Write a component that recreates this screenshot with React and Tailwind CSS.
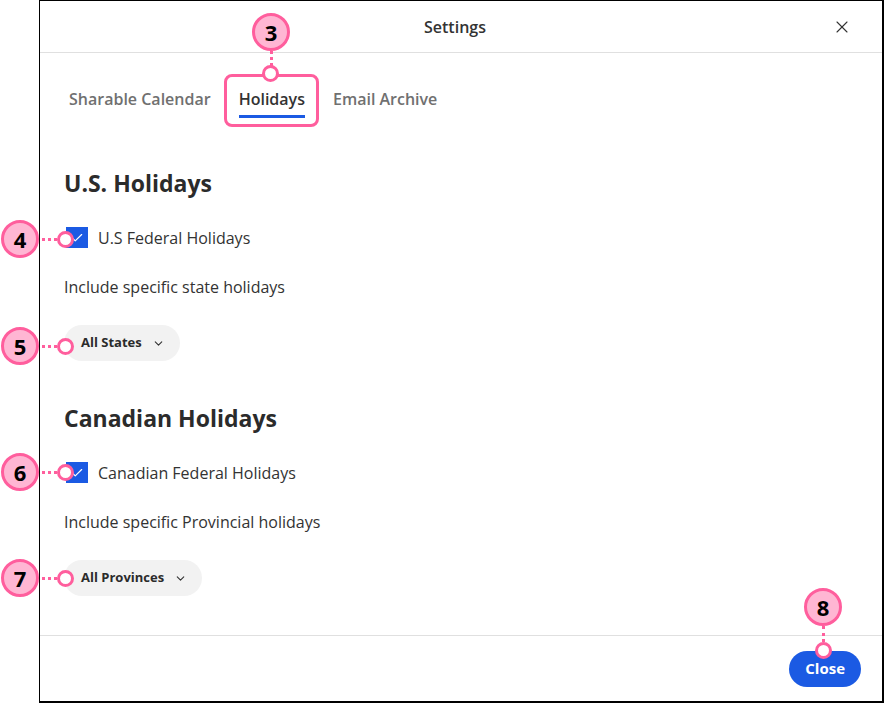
import { X, ChevronDown, Check } from 'lucide-react';

const font = { fontFamily: '"Open Sans", "Noto Sans", sans-serif' };

const Marker = ({ n, className }) => (
  <div className={`absolute w-[38px] h-[38px] rounded-full bg-[#ffb6d3] border-[3px] border-[#ff5e9d] flex items-center justify-center text-[22px] font-bold text-black ${className}`}>
    {n}
  </div>
);

const Dot = ({ className }) => (
  <div className={`absolute w-[17px] h-[17px] rounded-full bg-white border-[3px] border-[#ff5e9d] ${className}`} />
);

// marker on the left edge: circle, dotted leader, small ring
const SideMarker = ({ n, className }) => (
  <div className={`absolute left-[1px] flex items-center ${className}`}>
    <div className="w-[38px] h-[38px] rounded-full bg-[#ffb6d3] border-[3px] border-[#ff5e9d] flex items-center justify-center text-[22px] font-bold text-black">
      {n}
    </div>
    <div className="w-[15px] ml-[3px] border-t-[3px] border-dotted border-[#ff5e9d]" />
    <div className="w-[17px] h-[17px] rounded-full bg-white border-[3px] border-[#ff5e9d]" />
  </div>
);

const CheckRow = ({ label }) => (
  <label className="flex items-center gap-[10px] ml-[2px]">
    <span className="w-[22px] h-[21px] bg-[#1b5ae3] flex items-center justify-center">
      <Check className="w-[14px] h-[14px] text-white" strokeWidth={2} />
    </span>
    <span className="text-[16px] leading-[20px] text-[#333]">{label}</span>
  </label>
);

const Pill = ({ label }) => (
  <button className="flex items-center gap-[10px] h-[36px] pl-[17px] pr-[15px] rounded-full bg-[#f2f2f2] text-[13px] font-bold text-[#2b2b2b] w-fit">
    {label}
    <ChevronDown className="w-[13px] h-[13px] text-[#333]" strokeWidth={2} />
  </button>
);

export default function App() {
  const tabs = ['Sharable Calendar', 'Holidays', 'Email Archive'];

  return (
    <div className="relative w-[884px] h-[703px] bg-white overflow-hidden" style={font}>
      <div className="ml-[39px] w-[845px] h-[703px] border border-black border-r-2 border-b-2 flex flex-col">
        <div className="relative h-[52px] border-b border-[#e0e0e0] flex items-center justify-center pr-[12px] shrink-0">
          <span className="text-[16px] font-semibold text-[#333]">Settings</span>
          <X className="absolute right-[30px] top-[16px] w-[20px] h-[20px] text-[#333]" strokeWidth={1.3} />
        </div>

        <div className="flex gap-7 px-[29px] mt-[36px]">
          {tabs.map(t => (
            <div
              key={t}
              className={`text-[16px] leading-[20px] font-semibold pb-[6px] border-b-[3px] ${
                t === 'Holidays' ? 'text-[#333] border-[#1b5ae3]' : 'text-[#707070] border-transparent'
              }`}
            >
              {t}
            </div>
          ))}
        </div>

        <div className="px-[24px] flex flex-col">
          <h2 className="mt-[51px] text-[23px] leading-[28px] font-bold text-[#2b2b2b]">U.S. Holidays</h2>
          <div className="mt-[30px]"><CheckRow label="U.S Federal Holidays" /></div>
          <p className="mt-[29px] text-[16px] leading-[20px] text-[#333]">Include specific state holidays</p>
          <div className="mt-[28px]"><Pill label="All States" /></div>

          <h2 className="mt-[43px] text-[23px] leading-[28px] font-bold text-[#2b2b2b]">Canadian Holidays</h2>
          <div className="mt-[30px]"><CheckRow label="Canadian Federal Holidays" /></div>
          <p className="mt-[29px] text-[16px] leading-[20px] text-[#333]">Include specific Provincial holidays</p>
          <div className="mt-[28px]"><Pill label="All Provinces" /></div>
        </div>

        <div className="flex-1" />
        <div className="h-[66px] border-t border-[#e0e0e0] flex items-center justify-end pr-[21px] shrink-0">
          <button className="h-[36px] px-[16px] rounded-full bg-[#1b5ae3] text-white text-[15px] font-bold">Close</button>
        </div>
      </div>

      {/* annotations */}
      <Marker n="3" className="left-[252px] top-[13px]" />
      <div className="absolute left-[270px] top-[51px] h-[15px] border-l-[3px] border-dotted border-[#ff5e9d]" />
      <div className="absolute left-[224px] top-[74px] w-[95px] h-[53px] rounded-[8px] border-[3px] border-[#ff5e9d]" />
      <Dot className="left-[262px] top-[65px]" />

      <SideMarker n="4" className="top-[220px]" />
      <SideMarker n="5" className="top-[327px]" />
      <SideMarker n="6" className="top-[453px]" />
      <SideMarker n="7" className="top-[559px]" />

      <Marker n="8" className="left-[804px] top-[588px]" />
      <div className="absolute left-[822px] top-[626px] h-[16px] border-l-[3px] border-dotted border-[#ff5e9d]" />
      <Dot className="left-[815px] top-[642px]" />
    </div>
  );
}
